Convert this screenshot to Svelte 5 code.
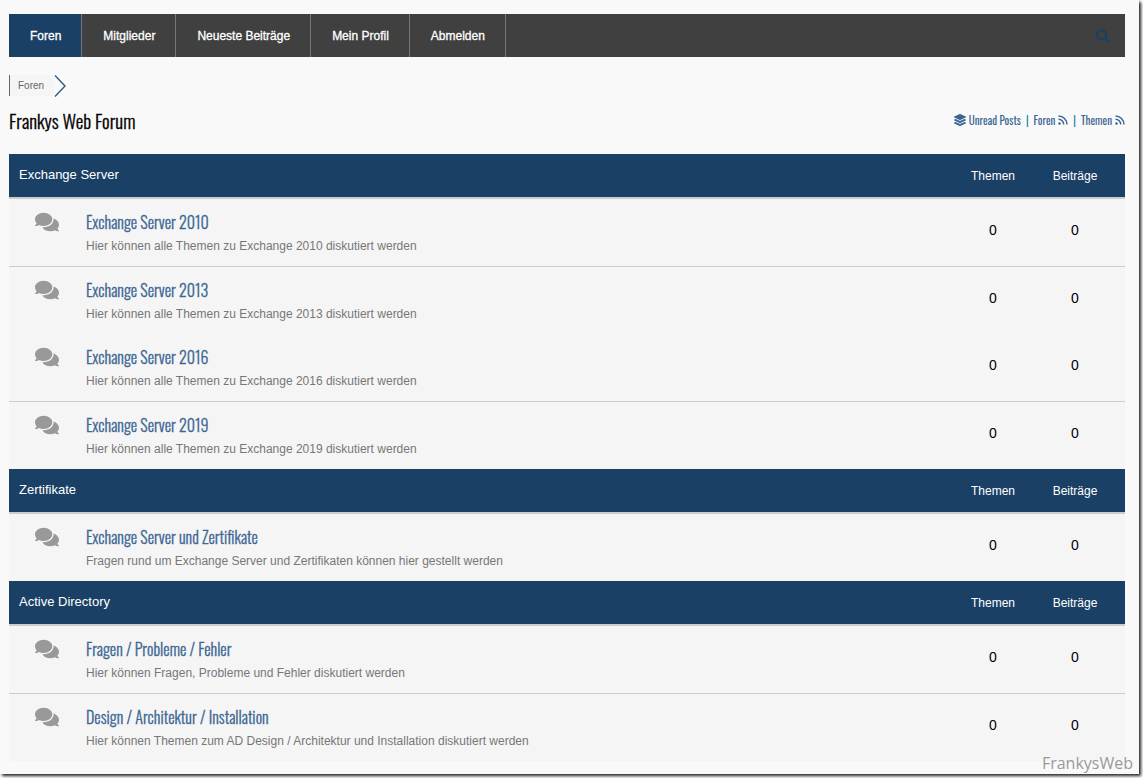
<script>
  const navItems = ['Foren', 'Mitglieder', 'Neueste Beiträge', 'Mein Profil', 'Abmelden'];

  const categories = [
    {
      title: 'Exchange Server',
      forums: [
        { title: 'Exchange Server 2010', text: 'Hier können alle Themen zu Exchange 2010 diskutiert werden', line: true },
        { title: 'Exchange Server 2013', text: 'Hier können alle Themen zu Exchange 2013 diskutiert werden' },
        { title: 'Exchange Server 2016', text: 'Hier können alle Themen zu Exchange 2016 diskutiert werden', line: true },
        { title: 'Exchange Server 2019', text: 'Hier können alle Themen zu Exchange 2019 diskutiert werden' }
      ]
    },
    {
      title: 'Zertifikate',
      forums: [
        { title: 'Exchange Server und Zertifikate', text: 'Fragen rund um Exchange Server und Zertifikaten können hier gestellt werden' }
      ]
    },
    {
      title: 'Active Directory',
      forums: [
        { title: 'Fragen / Probleme / Fehler', text: 'Hier können Fragen, Probleme und Fehler diskutiert werden', line: true },
        { title: 'Design / Architektur / Installation', text: 'Hier können Themen zum AD Design / Architektur und Installation diskutiert werden' }
      ]
    }
  ];
</script>

{#snippet rss()}
  <svg class="rss" viewBox="0 0 20 20" aria-hidden="true">
    <circle cx="3" cy="17" r="2.500" />
    <path d="M1 8.500A10.500 10.500 0 0 1 11.500 19M1 2A17 17 0 0 1 18 19" />
  </svg>
{/snippet}

<div class="frame">
  <div class="page">
    <nav class="menu">
      {#each navItems as item, i}
        <a href="#top" class:active={i === 0}>{item}</a>
      {/each}
      <button type="button" class="search" aria-label="Suche">
        <svg viewBox="0 0 512 512" aria-hidden="true">
          <path d="M505 442.700L405.300 343c-4.500-4.500-10.600-7-17-7H372c27.600-35.300 44-79.700 44-128C416 93.100 322.900 0 208 0S0 93.100 0 208s93.100 208 208 208c48.300 0 92.700-16.400 128-44v16.300c0 6.400 2.500 12.500 7 17l99.700 99.700c9.400 9.400 24.600 9.400 33.900 0l28.300-28.300c9.400-9.400 9.400-24.600.1-34zM208 336c-70.700 0-128-57.200-128-128 0-70.700 57.200-128 128-128 70.700 0 128 57.200 128 128 0 70.700-57.200 128-128 128z" />
        </svg>
      </button>
    </nav>

    <div class="breadcrumb">
      <a href="#top">Foren</a>
      <svg viewBox="0 0 12 22" aria-hidden="true"><path d="M1 0.500L11 11L1 21.500" /></svg>
    </div>

    <header class="head">
      <h1>Frankys Web Forum</h1>
      <div class="feeds">
        <a href="#unread">
          <svg class="layers" viewBox="0 0 512 512" aria-hidden="true">
            <path d="M12.400 148l232.900 105.700c6.800 3.100 14.500 3.100 21.300 0L499.600 148c16.600-7.500 16.600-32.500 0-40L266.600 2.300a25.600 25.600 0 0 0-21.300 0L12.400 108c-16.600 7.500-16.600 32.500 0 40zM499.600 236.300l-58.100-26.300-161.600 73.300c-7.600 3.400-15.600 5.200-23.900 5.200s-16.300-1.700-23.900-5.200L70.500 210l-58.100 26.300c-16.600 7.500-16.600 32.500 0 40l232.900 105.600c6.800 3.100 14.500 3.100 21.300 0L499.600 276.300c16.600-7.500 16.600-32.500 0-40zM499.600 364.100l-57.900-26.200-161.900 73.400c-7.500 3.400-15.600 5.200-23.800 5.200s-16.300-1.700-23.900-5.200L70.300 337.900l-57.900 26.200c-16.600 7.500-16.600 32.500 0 40l232.900 105.600c6.800 3.100 14.500 3.100 21.300 0L499.600 404.100c16.600-7.500 16.600-32.500 0-40z" />
          </svg>
          Unread Posts
        </a>
        <span>|</span>
        <a href="#foren">Foren {@render rss()}</a>
        <span>|</span>
        <a href="#themen">Themen {@render rss()}</a>
      </div>
    </header>

    <table>
      {#each categories as category}
        <tbody>
          <tr class="category">
            <th class="name" colspan="2">{category.title}</th>
            <th class="count">Themen</th>
            <th class="count">Beiträge</th>
          </tr>
          {#each category.forums as forum}
            <tr class="forum" class:line={forum.line}>
              <td class="icon">
                <svg viewBox="0 0 576 512" aria-hidden="true">
                  <path d="M416 192c0-88.400-93.100-160-208-160S0 103.600 0 192c0 34.300 14.100 65.900 38 92-13.400 30.200-35.500 54.200-35.800 54.500-2.200 2.300-2.800 5.700-1.500 8.700S4.800 352 8 352c36.600 0 66.900-12.300 88.700-25 32.200 15.700 70.300 25 111.300 25 114.900 0 208-71.600 208-160zm122 220c23.900-26 38-57.700 38-92 0-66.900-53.500-124.200-129.300-148.100.9 6.600 1.300 13.300 1.300 20.100 0 105.900-107.700 192-240 192-10.800 0-21.300-.8-31.700-1.900C207.800 439.600 281.800 480 368 480c41 0 79.100-9.200 111.300-25 21.800 12.700 52.100 25 88.700 25 3.200 0 6.100-1.900 7.300-4.800 1.300-2.900.7-6.300-1.500-8.700-.3-.3-22.400-24.200-35.800-54.500z" />
                </svg>
              </td>
              <td class="info">
                <a href="#forum">{forum.title}</a>
                <p>{forum.text}</p>
              </td>
              <td class="count">0</td>
              <td class="count">0</td>
            </tr>
          {/each}
        </tbody>
      {/each}
    </table>

    <div class="watermark">FrankysWeb</div>
  </div>
</div>

<style>
  :global(body) {
    background: #fff;
  }

  .frame {
    display: flex;
    box-sizing: border-box;
    min-height: 100vh;
    padding: 0 4px 4px 0;
    overflow: hidden;
  }

  .page {
    position: relative;
    flex: 1;
    padding: 14px 14px 13px 9px;
    background: #f9f9f9;
    box-shadow: 2px 2px 3px #222;
    font-family: Arial, "Liberation Sans", sans-serif;
    font-size: 12px;
  }

  a {
    text-decoration: none;
  }

  svg {
    fill: currentColor;
  }

  .menu {
    display: flex;
    height: 43px;
    background: #404040;
  }

  .menu a {
    padding: 0 20px 0 21px;
    border-right: 1px solid #777;
    color: #fff;
    line-height: 44px;
    -webkit-text-stroke: 0.3px #fff;
  }

  .menu a.active {
    background: #1b4065;
  }

  .search {
    margin-left: auto;
    padding: 0 15px;
    border: 0;
    background: none;
    color: #1b4065;
  }

  .search svg {
    display: block;
    width: 14px;
    height: 14px;
  }

  .breadcrumb {
    display: flex;
    height: 22px;
    margin-top: 18px;
  }

  .breadcrumb a {
    height: 21px;
    padding: 0 10px 0 8px;
    border-left: 1px solid #666;
    background: #f5f5f5;
    color: #666;
    font-size: 10px;
    line-height: 21px;
  }

  .breadcrumb svg {
    width: 12px;
    height: 22px;
    fill: none;
    stroke: #315a88;
    stroke-width: 1.4;
  }

  .head {
    display: flex;
    align-items: center;
    justify-content: space-between;
    height: 46px;
    padding-bottom: 11px;
  }

  h1,
  .feeds,
  .info a {
    font-family: Oswald, "Liberation Sans Narrow", "Arial Narrow", sans-serif;
    font-weight: 300;
  }

  h1,
  .info a {
    -webkit-text-stroke: 0.3px currentColor;
  }

  h1 {
    margin: 0;
    font-size: 19px;
    color: #000;
  }

  .feeds {
    display: flex;
    align-items: center;
    gap: 5px;
    color: #0678a8;
    font-size: 11px;
    font-weight: 400;
  }

  .feeds a {
    display: flex;
    align-items: center;
    gap: 3px;
    color: #3b6693;
  }

  .layers {
    width: 12px;
    height: 12px;
  }

  .rss {
    width: 10px;
    height: 10px;
  }

  .rss path {
    fill: none;
    stroke: currentColor;
    stroke-width: 3;
  }

  table {
    width: 100%;
    border-spacing: 0;
  }

  th,
  td {
    padding: 0;
  }

  .category th {
    height: 43px;
    border-bottom: 2px solid #ccc;
    background: #1b4065;
    color: #fff;
    font-weight: 400;
  }

  .category .name {
    padding: 0 0 2px 10px;
    height: 41px;
    font-size: 13px;
    text-align: left;
  }

  .count {
    width: 82px;
    text-align: center;
  }

  .count:last-child {
    padding-right: 9px;
  }

  .forum td {
    height: 67px;
    background: #f5f5f5;
  }

  .forum.line td {
    border-bottom: 1px solid #ccc;
  }

  .forum .icon {
    width: 77px;
    vertical-align: top;
  }

  .icon svg {
    display: block;
    width: 24px;
    height: 22px;
    margin: 12px 0 0 26px;
    color: #999;
  }

  .forum .info {
    height: 65px;
    padding-top: 2px;
  }

  .info a {
    display: block;
    color: #3b6693;
    font-size: 16px;
    line-height: 24px;
  }

  .info p {
    margin: 0;
    color: #777;
    line-height: 24px;
  }

  .forum .count {
    height: 61px;
    padding-bottom: 6px;
    font-size: 14px;
    color: #000;
  }

  .watermark {
    position: absolute;
    right: 6px;
    bottom: 1px;
    color: #999;
    font-family: "Open Sans", sans-serif;
    font-size: 16px;
    line-height: 20px;
  }
</style>
